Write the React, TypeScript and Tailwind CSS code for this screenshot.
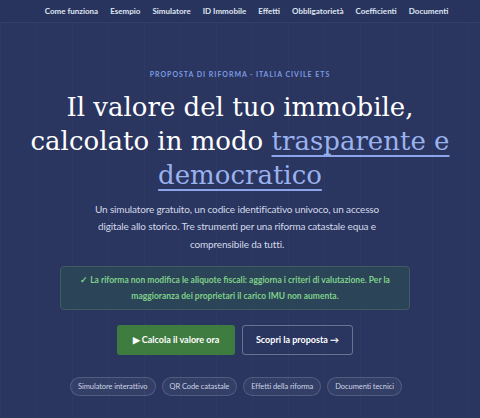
import React from "react";

const navItems = [
  "Come funziona",
  "Esempio",
  "Simulatore",
  "ID Immobile",
  "Effetti",
  "Obbligatorietà",
  "Coefficienti",
  "Documenti",
];

const pills = [
  "Simulatore interattivo",
  "QR Code catastale",
  "Effetti della riforma",
  "Documenti tecnici",
];

const sans = "font-['Lato','Noto_Sans',sans-serif]";

export default function App() {
  return (
    <div
      className={`min-h-[418px] w-full bg-[#2a3560] ${sans} bg-[linear-gradient(90deg,rgba(255,255,255,0.025)_1px,transparent_1px)] bg-[size:36px_36px]`}
    >
      <nav className="flex h-[23px] items-center justify-center gap-[12px] whitespace-nowrap border-b border-white/5 bg-[#29345e] pl-[13px] text-[8px] font-bold text-[#dfe4f0]">
        {navItems.map((n) => (
          <span key={n}>{n}</span>
        ))}
      </nav>

      <main className="flex flex-col items-center px-6 pt-[46px] text-center">
        <p className="text-[7px] font-bold tracking-[0.14em] text-[#7d9ae0]">
          PROPOSTA DI RIFORMA · ITALIA CIVILE ETS
        </p>

        <h1 className="mt-[10px] whitespace-nowrap font-['DejaVu_Serif',serif] text-[26px] leading-[34px] font-normal text-white">
          Il valore del tuo immobile,
          <br />
          calcolato in modo{" "}
          <span className="text-[#9ab2ee] underline decoration-[#8aa6e8] decoration-2 underline-offset-[5px] [text-decoration-skip-ink:none]">
            trasparente e
            <br />
            democratico
          </span>
        </h1>

        <p className="mt-[9px] mr-[6px] w-[300px] text-[10px] leading-[17.5px] tracking-[-0.015em] text-[#d3d9e8]">
          Un simulatore gratuito, un codice identificativo univoco, un accesso
          digitale allo storico. Tre strumenti per una riforma catastale equa e
          comprensibile da tutti.
        </p>

        <div className="mt-[13px] mr-[10px] w-[350px] rounded-[4px] border border-[#3e5b66] bg-[#2c4457] px-3 py-[5px] text-[8.5px] leading-[16px] font-bold text-[#7fd08b]">
          ✓ La riforma non modifica le aliquote fiscali: aggiorna i criteri di
          valutazione. Per la maggioranza dei proprietari il carico IMU non
          aumenta.
        </div>

        <div className="mt-[15px] mr-[10px] flex gap-[7px]">
          <button className="flex h-[30px] w-[118px] items-center justify-center rounded-[3px] bg-[#3f7c3f] text-[9px] font-bold text-white">
            ▶ Calcola il valore ora
          </button>
          <button className="flex h-[30px] w-[111px] items-center justify-center rounded-[3px] border border-white/30 text-[9px] font-bold text-white">
            Scopri la proposta →
          </button>
        </div>

        <div className="mt-[22px] mr-[8px] flex gap-[6px]">
          {pills.map((p) => (
            <span
              key={p}
              className="flex h-[19px] items-center whitespace-nowrap rounded-full border border-white/15 bg-white/5 px-[7px] text-[7.5px] tracking-[-0.01em] text-[#cdd3e3]"
            >
              {p}
            </span>
          ))}
        </div>
      </main>
    </div>
  );
}
